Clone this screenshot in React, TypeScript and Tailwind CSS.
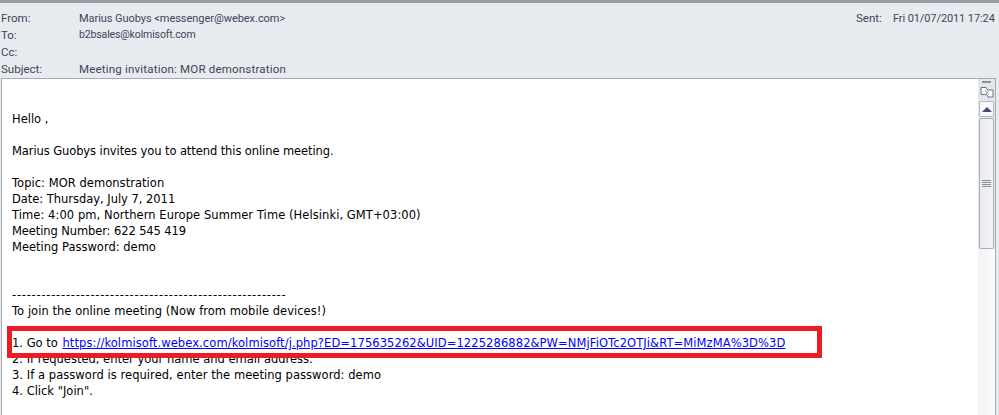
const bodyLines: [string, string?][] = [
  ["Hello ,"],
  [""],
  ["Marius Guobys invites you to attend this online meeting.", "tracking-[-0.09px]"],
  [""],
  ["Topic: MOR demonstration", "tracking-[0.04px]"],
  ["Date: Thursday, July 7, 2011", "tracking-[-0.03px]"],
  ["Time: 4:00 pm, Northern Europe Summer Time (Helsinki, GMT+03:00)", "tracking-[0.07px]"],
  ["Meeting Number: 622 545 419", "tracking-[-0.1px]"],
  ["Meeting Password: demo"],
  [""],
  [""],
  ["--------------------------------------------------------", "tracking-[0.75px]"],
  ["To join the online meeting (Now from mobile devices!)", "tracking-[0.04px]"],
  [""],
];

const URL =
  "https://kolmisoft.webex.com/kolmisoft/j.php?ED=175635262&UID=1225286882&PW=NMjFiOTc2OTJi&RT=MiMzMA%3D%3D";

function HeaderRow({ label, children }: { label: string; children?: React.ReactNode }) {
  return (
    <div className="flex h-[17px] items-center">
      <span className="w-[79px] pl-px">{label}</span>
      {children}
    </div>
  );
}

function Scrollbar() {
  return (
    <div className="flex w-[17px] shrink-0 flex-col items-center bg-[#e3e6ec] pt-[2px]">
      <div className="h-[2px] w-[9px] bg-[#8d949c]" />
      <svg width="14" height="13" viewBox="0 0 14 13" className="mt-[3px]">
        <path d="M1 1.5h5l1.5 2.5h5.5v7h-5l-1.5-2.5h-5.500z" fill="#fff" stroke="#6c6f74" />
        <path d="M5 4l4 5M9 4l-4 5" stroke="#9a9da1" strokeWidth="1" />
      </svg>
      <div className="mt-[2px] flex h-[16px] w-[15px] items-center justify-center rounded-[2px] border border-[#b4b9c0] bg-[#f7f8fa]">
        <div className="h-0 w-0 border-x-[5px] border-b-[5px] border-x-transparent border-b-[#3f4d6e]" />
      </div>
      <div className="mt-px flex h-[131px] w-[15px] flex-col items-center justify-center gap-px rounded-[2px] border border-[#a9afb6] bg-gradient-to-r from-[#e9eaec] to-[#f3f4f5]">
        <div className="h-px w-[9px] bg-[#8a8f96]" />
        <div className="h-px w-[9px] bg-[#8a8f96]" />
        <div className="h-px w-[9px] bg-[#8a8f96]" />
        <div className="h-px w-[9px] bg-[#8a8f96]" />
      </div>
      <div className="w-full flex-1 bg-gradient-to-r from-[#f1f2f3] to-[#fbfbfc]" />
    </div>
  );
}

export default function App() {
  return (
    <div className="relative h-[415px] w-[999px] overflow-hidden bg-[#e7eaef]">
      <div className="h-[3px] bg-[#9a9ea4]" />
      <div className="relative h-[75px] pt-[7px] font-['Roboto',sans-serif] text-[11.5px] leading-none whitespace-nowrap text-[#3c4658]">
        <HeaderRow label="From:">
          <span className="text-[11px] tracking-[-0.05px]">Marius Guobys &lt;messenger@webex.com&gt;</span>
        </HeaderRow>
        <HeaderRow label="To:">
          <span className="text-[10.5px] tracking-[-0.13px]">b2bsales@kolmisoft.com</span>
        </HeaderRow>
        <HeaderRow label="Cc:" />
        <HeaderRow label="Subject:">
          <span className="tracking-[0.2px]">Meeting invitation: MOR demonstration</span>
        </HeaderRow>
        <div className="absolute top-[7px] left-[856px] flex h-[17px] items-center">
          <span className="w-[37px]">Sent:</span>
          <span className="text-[11px] tracking-[-0.1px]">Fri 01/07/2011 17:24</span>
        </div>
      </div>

      <div className="mr-[3px] ml-px flex h-[337px] border border-b-0 border-[#a5abb3]">
        <div className="flex-1 bg-white pt-[32px] pl-[10px] font-['DejaVu_Sans',sans-serif] text-[11.5px] leading-[16px] text-black">
          {bodyLines.map(([line, extra], i) => (
            <div key={i} className={`h-[16px] whitespace-pre ${extra ?? ""}`}>
              {line}
            </div>
          ))}
          <div className="h-[16px] whitespace-pre">
            1. Go to{" "}
            <a href="#" className="ml-px tracking-[0.09px] text-[#0000ff] underline">
              {URL}
            </a>
          </div>
          <div className="h-[16px] whitespace-pre">2. If requested, enter your name and email address.</div>
          <div className="h-[16px] whitespace-pre tracking-[0.05px]">3. If a password is required, enter the meeting password: demo</div>
          <div className="h-[16px] whitespace-pre">4. Click "Join".</div>
        </div>
        <Scrollbar />
      </div>

      <div className="absolute top-[326px] left-[7px] h-[32px] w-[815px] border-[5px] border-[#ed1c24]" />
    </div>
  );
}
